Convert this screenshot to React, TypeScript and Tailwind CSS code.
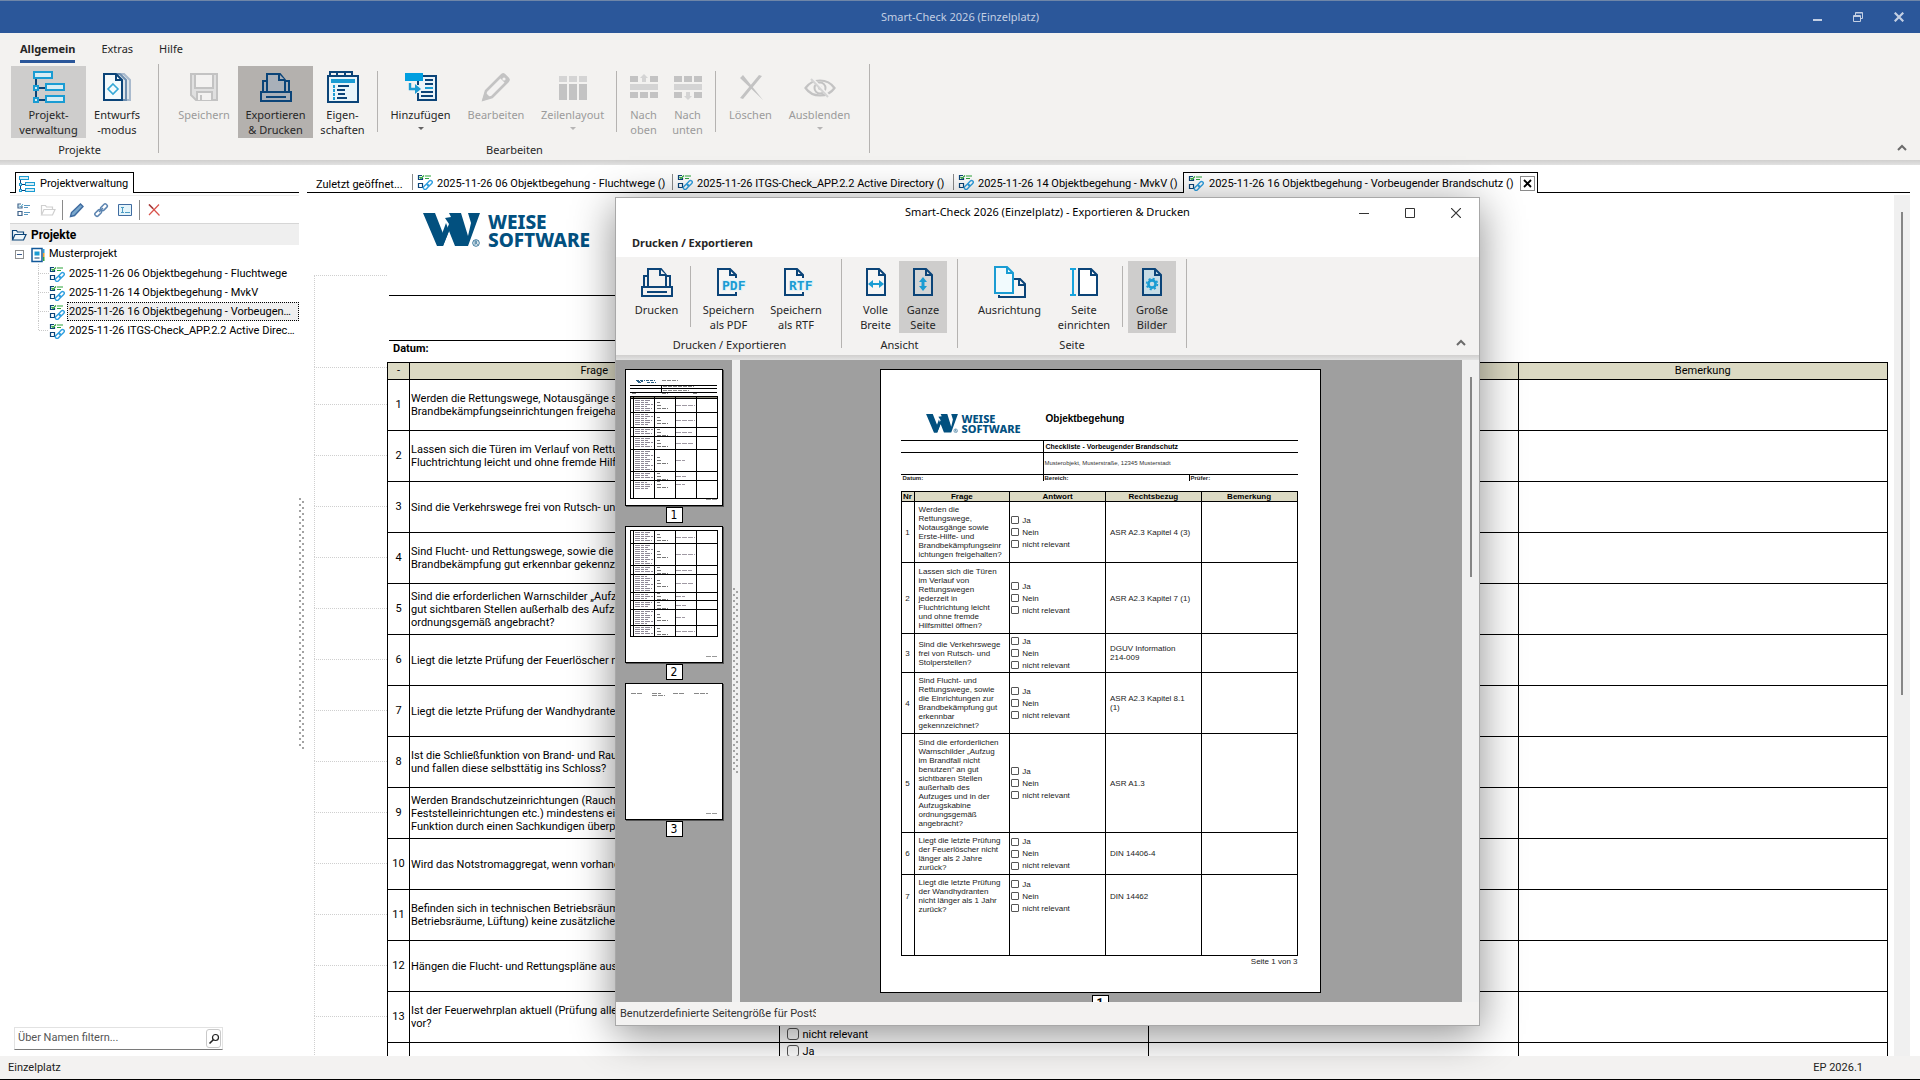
import { useState } from 'react'
import type { ReactNode } from 'react'
import clsx from 'clsx'

const NAVY = '#0b4478'
const CYAN = '#1a9cd3'
const GREY = '#c3c3c3'
const LIGHT = '#d4d4d4'

type IconProps = { children: ReactNode; size?: number; box?: number; className?: string }

function Svg({ children, size = 32, box = size, className }: IconProps) {
  return (
    <svg width={size} height={size} viewBox={`0 0 ${box} ${box}`} fill="none" aria-hidden="true" className={clsx('block shrink-0', className)}>
      {children}
    </svg>
  )
}

/* ---------- ribbon icons, 32px grid ---------- */

const TreeShape = (
  <g strokeWidth="2" shapeRendering="crispEdges">
    <path d="M3 8v23M6 17h7M6 29h7" stroke={NAVY} />
    <g stroke={CYAN} fill="#d7edf5">
      <path d="M1 1h18v6H1zM13 13h18v6H13zM13 25h18v6H13zM1 15h4v4H1zM1 27h4v4H1z" />
    </g>
  </g>
)

const TreeIcon = () => <Svg>{TreeShape}</Svg>

const DraftIcon = () => (
  <Svg>
    <g strokeWidth="2">
      <path d="M20 3h3l6 6v20h-4" stroke="#a9bacd" fill="#dfe5ea" />
      <path d="M16 3h3l6 6v20h-4" stroke="#6f8fb0" fill="#dfe5ea" />
      <path d="M3 3h12l6 6v20H3z" stroke={NAVY} fill="#f4fafc" />
      <path d="M15 3v6h6" stroke={NAVY} />
      <path d="M12 13l5 5-5 5-5-5z" stroke="#35a8d6" strokeWidth="1.6" />
    </g>
  </Svg>
)

const SaveIcon = () => (
  <Svg>
    <g stroke={GREY} strokeWidth="2">
      <path d="M3 3h26v26H8l-5-5z" fill="#e0e0e0" />
      <path d="M7 3h18v14H7z" fill="#f3f2f1" />
      <path d="M9 29v-8h15v8" fill="#f3f2f1" />
      <path d="M13 24v5" />
    </g>
  </Svg>
)

const PrintIcon = ({ fill = '#f3f2f1' }: { fill?: string }) => (
  <Svg>
    <g stroke={NAVY} strokeWidth="2" fill={fill}>
      <path d="M3 21V10h26v11" />
      <path d="M7 21V3h13l5 6v12" />
      <path d="M19 3v6h6" />
      <path d="M1 21h30v9H1z" shapeRendering="crispEdges" />
      <path d="M6 26h20" shapeRendering="crispEdges" />
    </g>
  </Svg>
)

const PropertiesIcon = () => (
  <Svg>
    <g shapeRendering="crispEdges">
      <path d="M1 5h30v26H1z" stroke={NAVY} strokeWidth="2" fill="#e9f5fa" />
      <path d="M3 4V1h22v3M10 1v4M18 1v4" stroke={NAVY} strokeWidth="2" />
      <path d="M4 8h24v4H4z" fill={CYAN} />
      <path d="M7 14v3M7 18v3M7 22v3M7 26v3" stroke={CYAN} strokeWidth="2" />
      <path d="M11 15h11M10 19h8M11 23h7M10 27h10" stroke={NAVY} strokeWidth="2" />
    </g>
  </Svg>
)

const AddIcon = () => (
  <Svg>
    <path d="M13 14V5h18v24H13v-7" stroke={NAVY} strokeWidth="2" fill="#eaf3f8" shapeRendering="crispEdges" />
    <path d="M20 9h8M20 13h8M16 21h12M16 25h12" stroke={NAVY} strokeWidth="2" shapeRendering="crispEdges" />
    <path d="M20 17h8" stroke={CYAN} strokeWidth="2" />
    <path d="M0 2h18v8H0z" fill="#009fe0" />
    <path d="M5 12v6h6" stroke={CYAN} strokeWidth="2.4" />
    <path d="M10 13l6 5-6 5z" fill={CYAN} />
  </Svg>
)

const PencilIcon = () => (
  <Svg>
    <path d="M3.500 28.500l2.500-8.500L21.500 4.500c1-1 2-1 3 0l3 3c1 1 1 2 0 3L12 26z" stroke={GREY} strokeWidth="2.600" fill="#f3f2f1" />
    <path d="M19 6l7 7 3-3c.8-1 .8-2 0-3l-4-4c-1-1-2-1-3 0zM2 30l3-9 6 6z" fill={GREY} />
    <circle cx="24" cy="8" r="1.600" fill="#f3f2f1" />
  </Svg>
)

const RowLayoutIcon = () => (
  <Svg>
    <path d="M2 5h8v6H2zM12 5h8v6h-8zM22 5h8v6h-8z" fill={LIGHT} />
    <path d="M2 13h8v16H2zM12 13h8v16h-8zM22 13h8v16h-8z" fill={GREY} />
  </Svg>
)

const MoveUpIcon = () => (
  <Svg>
    <path d="M2 5h8v6H2zM22 5h8v6h-8zM2 21h8v6H2zM12 21h8v6h-8zM22 21h8v6h-8z" fill={GREY} />
    <path d="M2 13h28v6H2z" fill={LIGHT} />
    <path d="M16 3l4 4h-2v4h-4V7h-2z" fill={LIGHT} />
  </Svg>
)

const MoveDownIcon = () => (
  <Svg>
    <path d="M2 5h8v6H2zM12 5h8v6h-8zM22 5h8v6h-8zM2 21h8v6H2zM22 21h8v6h-8z" fill={GREY} />
    <path d="M2 13h28v6H2z" fill={LIGHT} />
    <path d="M16 29l4-4h-2v-4h-4v4h-2z" fill={LIGHT} />
  </Svg>
)

const DeleteIcon = () => (
  <Svg>
    <path d="M8 4l20 25L5 7zM27 5L8 28l-3-1L24 4z" fill={GREY} />
  </Svg>
)

const HideIcon = () => (
  <Svg>
    <path d="M1.500 17C5 12 10 9.500 16 9.500S27 12 30.500 17C27 22 22 24.500 16 24.500S5 22 1.500 17z" stroke={GREY} strokeWidth="2.200" />
    <circle cx="16" cy="17" r="5.500" stroke={GREY} strokeWidth="2" />
    <circle cx="16" cy="17" r="2" fill={GREY} />
    <path d="M9 8l17 18" stroke="#f3f2f1" strokeWidth="2" />
    <path d="M7 8l17 18" stroke={LIGHT} strokeWidth="2" />
  </Svg>
)

const PageOutline = ({ fill = '#f7f6f5' }: { fill?: string }) => (
  <g stroke={NAVY} strokeWidth="2">
    <path d="M7 3h12l6 6v20H7z" fill={fill} />
    <path d="M19 3v6h6" />
  </g>
)

function FormatIcon({ label }: { label: string }) {
  return (
    <Svg className="overflow-visible">
      <path d="M23 12V9l-6-6H5v26h18v-3" stroke={NAVY} strokeWidth="2" fill="#f7f6f5" />
      <path d="M17 3v6h6" stroke={NAVY} strokeWidth="2" />
      <text x="9" y="24" fill={CYAN} stroke="#dff1f8" strokeWidth="2" paintOrder="stroke" className="font-['DejaVu_Sans_Mono',monospace] text-[13px] font-bold">
        {label}
      </text>
    </Svg>
  )
}

const FullWidthIcon = () => (
  <Svg>
    <PageOutline />
    <path d="M12 18h9" stroke={CYAN} strokeWidth="2" />
    <path d="M8 18l5-4v8zM24 18l-5-4v8z" fill={CYAN} />
  </Svg>
)

const FullPageIcon = () => (
  <Svg>
    <PageOutline fill="#d3d5d6" />
    <path d="M16 14v8" stroke={CYAN} strokeWidth="3" />
    <path d="M16 11l4 5h-8zM16 25l4-5h-8z" fill={CYAN} />
  </Svg>
)

const OrientationIcon = () => (
  <Svg>
    <path d="M5 29v2h26V18l-5-5h-6" stroke={NAVY} strokeWidth="2" fill="#f7f6f5" />
    <path d="M25 13v6h6" stroke={NAVY} strokeWidth="2" />
    <path d="M1 1h12l6 6v20H1z" stroke={CYAN} strokeWidth="2" fill="#f1fafd" />
    <path d="M13 1v6h6" stroke={CYAN} strokeWidth="2" />
  </Svg>
)

const PageSetupIcon = () => (
  <Svg>
    <path d="M2 3h6M2 29h6M5 3v26" stroke="#16a3dd" strokeWidth="2" />
    <path d="M11 3h12l6 6v20H11z" stroke={NAVY} strokeWidth="2" fill="#fff" />
    <path d="M23 3v6h6" stroke={NAVY} strokeWidth="2" />
  </Svg>
)

const LargeImagesIcon = () => (
  <Svg>
    <PageOutline fill="#c8dde6" />
    <circle cx="16" cy="18" r="3.600" stroke={CYAN} strokeWidth="2.600" />
    <circle cx="16" cy="18" r="5.400" stroke={CYAN} strokeWidth="1.600" strokeDasharray="2.100 2.140" />
  </Svg>
)

/* ---------- small icons ---------- */

const CheckLinkIcon = () => (
  <Svg size={16}>
    <path d="M5 1.500H1.500v4h4V4M1.500 9.500h4v4h-4z" stroke={NAVY} strokeWidth="1.200" />
    <path d="M2.500 3l1.500 1.500L7 1.500M8 2h6M8 4.500h4" stroke="#2da33a" strokeWidth="1.200" />
    <g stroke="#2f9fe0" strokeWidth="1.400">
      <rect x="-3" y="-1.700" width="6" height="3.400" rx="1.700" transform="translate(9 12.800) rotate(-45)" />
      <rect x="-3" y="-1.700" width="6" height="3.400" rx="1.700" transform="translate(12.600 9.200) rotate(-45)" />
    </g>
  </Svg>
)

const ListIcon = () => (
  <Svg size={16}>
    <path d="M5 2H2v4h4V4M2 9.500h4v4H2z" stroke="#40648c" strokeWidth="1.200" />
    <path d="M3 3.500l1.500 1.500L7 2" stroke="#49a4c8" />
    <path d="M8 3.500h6M8 5.500h4M8 10.500h6M8 12.500h4" stroke="#5796bf" />
  </Svg>
)

const FolderIcon = ({ color = NAVY, fill = '#eef6fa' }: { color?: string; fill?: string }) => (
  <Svg size={16}>
    <path d="M1.500 12.500v-9h4l1 1.500h6v2.500" stroke={color} fill={fill} strokeWidth="1.200" />
    <path d="M1.500 13l2.500-5.500h11L12.500 13z" stroke={color} fill={fill} strokeWidth="1.200" />
  </Svg>
)

const EditSmallIcon = () => (
  <Svg size={16}>
    <path d="M1.500 14.500l1-4L11.500 2l2.500 2.500-8.500 9z" stroke="#3f6ba0" strokeWidth="1.400" fill="#79a7cc" />
  </Svg>
)

const LinkSmallIcon = () => (
  <Svg size={16}>
    <g stroke="#5c84b0" strokeWidth="1.500">
      <rect x="-3.600" y="-2" width="7.200" height="4" rx="1.500" transform="translate(5.200 11) rotate(-45)" />
      <rect x="-3.600" y="-2" width="7.200" height="4" rx="1.500" transform="translate(11 5.200) rotate(-45)" />
      <path d="M6 10l4-4" />
    </g>
  </Svg>
)

const RenameIcon = () => (
  <Svg size={16}>
    <path d="M1.500 2.500h13v11h-13z" stroke="#3f6ba0" fill="#e4f4fa" />
    <path d="M4 5.500h3M5.500 5v6M4 10.500h3M8 10.500h5" stroke="#4c9cc4" />
  </Svg>
)

const RemoveIcon = () => (
  <Svg size={16}>
    <path d="M3 2.500l10.500 11M13 2.500L3 13" stroke="#d9534c" strokeWidth="1.200" />
    <path d="M3 2.500l4 4" stroke="#a04040" strokeWidth="1.400" />
  </Svg>
)

const BookIcon = () => (
  <Svg size={16}>
    <path d="M2 1.500h10v13H2z" stroke="#12599a" strokeWidth="1.500" fill="#fff" />
    <path d="M4.500 4.500h5v4h-5z" fill={CYAN} />
    <path d="M4.500 11h5" stroke={NAVY} />
    <path d="M13 2h1.500v4H13z" fill="#2ba2dc" />
    <path d="M13 6h1.500v4H13z" fill="#f0a030" />
    <path d="M13 10h1.500v4H13z" fill="#3aa745" />
  </Svg>
)

const Chevron = () => (
  <Svg size={10}>
    <path d="M1 7l4-4 4 4" stroke="#6b6b6b" strokeWidth="2" />
  </Svg>
)

const WMark = ({ className }: { className?: string }) => (
  <svg viewBox="0 0 57 34" aria-hidden="true" className={clsx('shrink-0 text-[#02507f]', className)} fill="currentColor">
    <path d="M0 0h12l9 23 5-12-4-6 6-1-2-4h12l7 23L48 10 45 0h12L45 33H32l-6-15-6 15h-6z" />
    <path d="M14 33h6l6-15-3-8-7 19z" />
    <circle cx="53" cy="30" r="3.300" fill="none" stroke="currentColor" strokeWidth=".8" />
    <path d="M52 32v-4h1.500l.5 1-.5 1H52M53.500 30l1 2" fill="none" stroke="currentColor" strokeWidth=".7" />
  </svg>
)

/* ---------- ribbon parts ---------- */

type RibbonButtonProps = {
  icon: ReactNode
  lines: string[]
  width: string
  disabled?: boolean
  dropdown?: boolean
  state?: 'checked' | 'pressed'
}

function RibbonButton({ icon, lines, width, disabled, dropdown, state }: RibbonButtonProps) {
  return (
    <button
      type="button"
      disabled={disabled}
      className={clsx(
        'flex h-[72px] shrink-0 flex-col items-center pt-[5px] text-[11px] leading-[15px]',
        width,
        disabled ? 'text-[#9b9b9b]' : 'text-[#262626]',
        state === 'checked' && 'bg-[#cecdcc]',
        state === 'pressed' && 'bg-[#b4b1ae]',
      )}
    >
      {icon}
      <span className="mt-1 block whitespace-nowrap">
        {lines.map((line) => (
          <span key={line} className="block">{line}</span>
        ))}
      </span>
      {dropdown ? <span className="mt-[5px] border-x-[3px] border-t-[3px] border-x-transparent border-t-current opacity-70" /> : null}
    </button>
  )
}

const InnerSeparator = () => <span className="mx-[5px] mt-[5px] h-[61px] w-px shrink-0 bg-[#b5b3b1]" />

function RibbonGroup({ label, children, className }: { label: string; children: ReactNode; className?: string }) {
  return (
    <div className={clsx('flex h-[89px] shrink-0 flex-col border-r border-[#b5b3b1] pt-[2px]', className)}>
      <div className="flex">{children}</div>
      <div className="pt-1 text-center text-[11px] leading-[15px] text-[#262626]">{label}</div>
    </div>
  )
}

const ribbonShadow = 'h-[5px] shrink-0 bg-linear-to-b from-[#d0cfce] to-[#e2e2e2]'

/* ---------- main window ---------- */

function TitleBar() {
  return (
    <header className="flex h-[33px] shrink-0 items-center border-t border-[#6f86a8] bg-[#2b579a] text-[#c3cfe3]">
      <span className="w-[138px]" />
      <h1 className="flex-1 text-center text-[11px]">Smart-Check 2026 (Einzelplatz)</h1>
      <div className="flex w-[138px] items-center justify-end gap-[31px] pr-4">
        <button type="button" aria-label="Minimieren">
          <Svg size={10}><path d="M1 8h9" stroke="currentColor" strokeWidth="2" /></Svg>
        </button>
        <button type="button" aria-label="Wiederherstellen">
          <Svg size={10}><path d="M.5 3.500h7v6h-7zM2.500 3V.5h7v6H8M.5 4.500h7M2.500 1h7" stroke="currentColor" /></Svg>
        </button>
        <button type="button" aria-label="Schließen">
          <Svg size={10}><path d="M.7.7l8.600 8.600M9.300.7L.7 9.300" stroke="currentColor" strokeWidth="2.200" /></Svg>
        </button>
      </div>
    </header>
  )
}

function Ribbon() {
  const [tab, setTab] = useState('Allgemein')

  return (
    <div className="shrink-0 bg-[#f3f2f0] pb-[7px]">
      <nav className="flex h-[31px] items-end gap-[26px] pb-px pl-5 text-[11px] leading-[15px] text-[#262626]">
        {['Allgemein', 'Extras', 'Hilfe'].map((item) => (
          <button
            key={item}
            type="button"
            onClick={() => setTab(item)}
            className={clsx('border-b-[3px] pb-1', tab === item ? 'border-[#2b579a] font-bold' : 'border-transparent')}
          >
            {item}
          </button>
        ))}
      </nav>
      <div className="flex">
        <RibbonGroup label="Projekte" className="pr-[10px] pl-[11px]">
          <RibbonButton width="w-[75px]" icon={<TreeIcon />} lines={['Projekt-', 'verwaltung']} state="checked" />
          <RibbonButton width="w-[62px]" icon={<DraftIcon />} lines={['Entwurfs', '-modus']} />
        </RibbonGroup>
        <RibbonGroup label="Bearbeiten" className="pr-[10px] pl-[11px]">
          <RibbonButton width="w-[68px]" icon={<SaveIcon />} lines={['Speichern']} disabled />
          <RibbonButton width="w-[75px]" icon={<PrintIcon fill="#a9b0b9" />} lines={['Exportieren', '& Drucken']} state="pressed" />
          <RibbonButton width="w-[59px]" icon={<PropertiesIcon />} lines={['Eigen-', 'schaften']} />
          <InnerSeparator />
          <RibbonButton width="w-[75px]" icon={<AddIcon />} lines={['Hinzufügen']} dropdown />
          <RibbonButton width="w-[76px]" icon={<PencilIcon />} lines={['Bearbeiten']} disabled />
          <RibbonButton width="w-[77px]" icon={<RowLayoutIcon />} lines={['Zeilenlayout']} disabled dropdown />
          <InnerSeparator />
          <RibbonButton width="w-[43px]" icon={<MoveUpIcon />} lines={['Nach', 'oben']} disabled />
          <RibbonButton width="w-[45px]" icon={<MoveDownIcon />} lines={['Nach', 'unten']} disabled />
          <InnerSeparator />
          <RibbonButton width="w-[59px]" icon={<DeleteIcon />} lines={['Löschen']} disabled />
          <RibbonButton width="w-[79px]" icon={<HideIcon />} lines={['Ausblenden']} disabled dropdown />
        </RibbonGroup>
        <button type="button" aria-label="Menüband minimieren" className="mr-[13px] ml-auto self-end pb-0">
          <Chevron />
        </button>
      </div>
    </div>
  )
}

const projectFiles = [
  '2025-11-26 06 Objektbegehung - Fluchtwege',
  '2025-11-26 14 Objektbegehung - MvkV',
  '2025-11-26 16 Objektbegehung - Vorbeugender Brandschutz',
  '2025-11-26 ITGS-Check_APP.2.2 Active Directory',
]

function Sidebar() {
  const [selected, setSelected] = useState(2)

  return (
    <aside className="flex w-[289px] shrink-0 flex-col">
      <div className="flex h-[21px]">
        <span className="w-[5px] border-b border-black" />
        <button type="button" className="flex w-[119px] items-center gap-[5px] border-x border-t border-black pt-[2px] pl-[3px]">
          <Svg size={16} box={32}>{TreeShape}</Svg>
          Projektverwaltung
        </button>
        <span className="flex-1 border-b border-black" />
      </div>
      <div className="mt-[2px] flex h-[29px] items-center border-t border-b border-t-[#ededed] border-b-[#d6d6d6] pl-[6px]">
        <button type="button" aria-label="Checkliste"><ListIcon /></button>
        <button type="button" aria-label="Öffnen" className="ml-2"><FolderIcon color="#cfcfcf" fill="#fff" /></button>
        <span className="mx-[6px] h-5 w-px bg-[#8a8a8a]" />
        <button type="button" aria-label="Bearbeiten"><EditSmallIcon /></button>
        <button type="button" aria-label="Verknüpfen" className="ml-2"><LinkSmallIcon /></button>
        <button type="button" aria-label="Umbenennen" className="ml-2"><RenameIcon /></button>
        <span className="mx-[6px] h-5 w-px bg-[#8a8a8a]" />
        <button type="button" aria-label="Löschen"><RemoveIcon /></button>
      </div>
      <div className="flex h-[21px] items-center gap-1 bg-[#efefef] pl-[1px] text-[12px] font-bold">
        <FolderIcon />
        Projekte
      </div>
      <div className="flex h-[19px] items-center pl-[5px]">
        <button type="button" aria-label="Zuklappen" className="flex size-[9px] items-center justify-center border border-[#8d8d8d] bg-white">
          <span className="h-px w-[5px] bg-[#3b5b8b]" />
        </button>
        <span className="mr-1 w-[2px]" />
        <BookIcon />
        <span className="ml-[3px]">Musterprojekt</span>
      </div>
      <ul>
        {projectFiles.map((name, i) => (
          <li key={name} className="flex h-[19px] items-center pl-7">
            <svg width="11" height="19" className="shrink-0" aria-hidden="true">
              <path d={i === projectFiles.length - 1 ? 'M.5 0v9.500H11' : 'M.5 0v19M0 9.500h11'} fill="none" stroke="#c9c9c9" strokeDasharray="1 1" />
            </svg>
            <CheckLinkIcon />
            <button
              type="button"
              onClick={() => setSelected(i)}
              className={clsx('ml-[2px] h-[19px] min-w-0 truncate border border-dotted px-px pt-px text-left', selected === i ? 'flex-1 border-black bg-[#efefef]' : 'border-transparent')}
            >
              {name}
            </button>
          </li>
        ))}
      </ul>
      <div className="mt-auto mb-[6px] ml-1 flex h-[23px] w-[209px] items-center border border-[#e2e2e2] border-b-[#7a7a7a] pr-[1px] pl-[3px]">
        <input aria-label="Über Namen filtern" placeholder="Über Namen filtern..." className="min-w-0 flex-1 bg-transparent outline-none placeholder:text-[#555]" />
        <button type="button" aria-label="Suchen" className="flex h-[19px] w-[15px] items-center justify-center rounded-[3px] border border-[#c9c9c9]">
          <Svg size={12}><circle cx="7.500" cy="4.500" r="3" stroke="#222" strokeWidth="1.200" /><path d="M5.300 6.800L1.500 10.500" stroke="#222" strokeWidth="1.600" /></Svg>
        </button>
      </div>
    </aside>
  )
}

function DotGrip({ id, className }: { id: string; className: string }) {
  return (
    <svg width="6" aria-hidden="true" className={clsx('shrink-0 self-center', className)}>
      <pattern id={id} width="6" height="6" patternUnits="userSpaceOnUse">
        <path d="M0 0h2v2H0zM3 3h2v2H3z" fill="#a3a3a3" />
      </pattern>
      <rect width="6" height="100%" fill={`url(#${id})`} />
    </svg>
  )
}

const documentTabs = [
  { label: '2025-11-26 06 Objektbegehung - Fluchtwege ()', width: 'w-[260px]' },
  { label: '2025-11-26 ITGS-Check_APP.2.2 Active Directory ()', width: 'w-[281px]' },
  { label: '2025-11-26 14 Objektbegehung - MvkV ()', width: 'w-[230px]' },
]

function DocumentTabs() {
  return (
    <div className="flex h-[21px] shrink-0 whitespace-nowrap">
      <button type="button" className="w-[105px] border-b border-black pt-[5px] pl-[9px] text-left">Zuletzt geöffnet...</button>
      {documentTabs.map((tab) => (
        <button key={tab.label} type="button" className={clsx('flex items-center border-b border-black', tab.width)}>
          <span className="mr-1 h-4 w-px bg-[#8a8a8a]" />
          <CheckLinkIcon />
          <span className="ml-1 pt-1">{tab.label}</span>
        </button>
      ))}
      <div className="flex w-[355px] items-center border-x border-t border-black pl-1">
        <CheckLinkIcon />
        <span className="ml-[5px] pt-[3px]">2025-11-26 16 Objektbegehung - Vorbeugender Brandschutz ()</span>
        <button type="button" aria-label="Tab schließen" className="mr-[2px] ml-auto flex size-[15px] items-center justify-center border border-[#8a8a8a]">
          <Svg size={9}><path d="M1 1l7 7M8 1L1 8" stroke="#000" strokeWidth="1.800" /></Svg>
        </button>
      </div>
      <span className="flex-1 border-b border-black" />
    </div>
  )
}

const questions = [
  ['Werden die Rettungswege, Notausgänge sowie Erste-Hilfe- und', 'Brandbekämpfungseinrichtungen freigehalten?'],
  ['Lassen sich die Türen im Verlauf von Rettungswegen jederzeit in', 'Fluchtrichtung leicht und ohne fremde Hilfsmittel öffnen?'],
  ['Sind die Verkehrswege frei von Rutsch- und Stolperstellen?'],
  ['Sind Flucht- und Rettungswege, sowie die Einrichtungen zur', 'Brandbekämpfung gut erkennbar gekennzeichnet?'],
  ['Sind die erforderlichen Warnschilder „Aufzug im Brandfall nicht benutzen“ an', 'gut sichtbaren Stellen außerhalb des Aufzuges und in der Aufzugskabine', 'ordnungsgemäß angebracht?'],
  ['Liegt die letzte Prüfung der Feuerlöscher nicht länger als 2 Jahre zurück?'],
  ['Liegt die letzte Prüfung der Wandhydranten nicht länger als 1 Jahr zurück?'],
  ['Ist die Schließfunktion von Brand- und Rauchschutztüren gewährleistet', 'und fallen diese selbsttätig ins Schloss?'],
  ['Werden Brandschutzeinrichtungen (Rauchabzüge,', 'Feststelleinrichtungen etc.) mindestens einmal jährlich auf ihre', 'Funktion durch einen Sachkundigen überprüft?'],
  ['Wird das Notstromaggregat, wenn vorhanden, regelmäßig geprüft?'],
  ['Befinden sich in technischen Betriebsräumen (z. B. elektrische', 'Betriebsräume, Lüftung) keine zusätzlichen Brandlasten?'],
  ['Hängen die Flucht- und Rettungspläne aus?'],
  ['Ist der Feuerwehrplan aktuell (Prüfung alle 2 Jahre) und liegt er', 'vor?'],
  [],
]

const answers = ['Ja', 'Nein', 'nicht relevant']
const cell = 'border border-black'

function ChecklistDocument() {
  return (
    <div className="mt-[2px] flex min-h-0 flex-1 overflow-hidden">
      <div className="ml-[7px] w-[73px] shrink-0 pt-[80px] [&>div]:border-t [&>div]:border-l [&>div]:border-dotted [&>div]:border-[#cfcfcf]">
        <div className="h-[92px]" />
        <div className="h-[37px]" />
        {questions.map((_, i) => <div key={i} className="h-[51px]" />)}
      </div>
      <div className="mr-[6px] min-w-0 flex-1">
        <div className="flex h-[100px] gap-2 pt-[18px] pl-9 text-[#02507f]">
          <WMark className="h-[34px] w-[57px]" />
          <div className="font-['Noto_Sans',sans-serif] text-[19px] leading-[18px] font-extrabold">WEISE<br />SOFTWARE</div>
        </div>
        <div className="ml-[2px] h-[46px] w-[760px] border-y border-black" />
        <div className="h-[21px] pl-[6px] font-bold">Datum:</div>
        <table className="w-full table-fixed border-collapse">
          <colgroup>
            <col className="w-[22px]" />
            <col />
            <col />
            <col />
            <col />
          </colgroup>
          <thead>
            <tr className="h-[17px] bg-[#dcdac4]">
              {['-', 'Frage', 'Antwort', 'Rechtsbezug', 'Bemerkung'].map((head) => (
                <th key={head} className={clsx(cell, 'leading-4 font-normal')}>{head}</th>
              ))}
            </tr>
          </thead>
          <tbody>
            {questions.map((lines, i) => (
              <tr key={i} className="h-[51px]">
                <td className={clsx(cell, 'text-center')}>{lines.length > 0 ? i + 1 : null}</td>
                <td className={clsx(cell, 'overflow-hidden pl-px leading-[13px] whitespace-nowrap')}>
                  {lines.map((line) => <div key={line}>{line}</div>)}
                </td>
                <td className={clsx(cell, 'pl-[7px]')}>
                  <div className="flex flex-col gap-px">
                    {answers.map((answer) => (
                      <label key={answer} className="flex h-4 items-center gap-1 leading-[15px]">
                        <input type="checkbox" className="size-3 appearance-none rounded-[3px] border border-[#555] bg-white" />
                        {answer}
                      </label>
                    ))}
                  </div>
                </td>
                <td className={cell} />
                <td className={cell} />
              </tr>
            ))}
          </tbody>
        </table>
      </div>
      <div className="mr-[10px] flex w-4 shrink-0 justify-center bg-[#f0f0f0] pt-[17px]">
        <span className="h-[483px] w-[2px] bg-[#868686]" />
      </div>
    </div>
  )
}

/* ---------- print dialog ---------- */

const printRows = [
  { height: 'h-[61px]', law: 'ASR A2.3 Kapitel 4 (3)', text: 'Werden die|Rettungswege,|Notausgänge sowie|Erste-Hilfe- und|Brandbekämpfungseinr|ichtungen freigehalten?' },
  { height: 'h-[71px]', law: 'ASR A2.3 Kapitel 7 (1)', text: 'Lassen sich die Türen|im Verlauf von|Rettungswegen|jederzeit in|Fluchtrichtung leicht|und ohne fremde|Hilfsmittel öffnen?' },
  { height: 'h-[39px]', law: 'DGUV Information|214-009', text: 'Sind die Verkehrswege|frei von Rutsch- und|Stolperstellen?' },
  { height: 'h-[61px]', law: 'ASR A2.3 Kapitel 8.1|(1)', text: 'Sind Flucht- und|Rettungswege, sowie|die Einrichtungen zur|Brandbekämpfung gut|erkennbar|gekennzeichnet?' },
  { height: 'h-[99px]', law: 'ASR A1.3', text: 'Sind die erforderlichen|Warnschilder „Aufzug|im Brandfall nicht|benutzen“ an gut|sichtbaren Stellen|außerhalb des|Aufzuges und in der|Aufzugskabine|ordnungsgemäß|angebracht?' },
  { height: 'h-[42px]', law: 'DIN 14406-4', text: 'Liegt die letzte Prüfung|der Feuerlöscher nicht|länger als 2 Jahre|zurück?' },
  { height: 'h-[81px]', law: 'DIN 14462', text: 'Liegt die letzte Prüfung|der Wandhydranten|nicht länger als 1 Jahr|zurück?' },
]

const Lines = ({ text }: { text: string }) => text.split('|').map((line) => <div key={line}>{line}</div>)

function PreviewPage() {
  return (
    <div className="h-[624px] w-[441px] border border-black bg-white pt-[44px] pr-[22px] pl-5 font-['Liberation_Sans',Arial,sans-serif] text-[8px] leading-[9px] text-[#222]">
      <div className="flex h-[26px] text-black">
        <div className="flex w-[145px] gap-1 pl-[25px] text-[#02507f]">
          <WMark className="h-[19px] w-[32px]" />
          <div className="font-['Noto_Sans',sans-serif] text-[11px] leading-[10px] font-extrabold">WEISE<br />SOFTWARE</div>
        </div>
        <div className="text-[10px] leading-[10px] font-bold">Objektbegehung</div>
      </div>
      <div className="grid grid-cols-[142px_1fr] text-black">
        <div className="h-[11px] border-t border-black" />
        <div className="border-t border-l border-black pl-[2px] text-[7px] leading-[11px] font-bold">Checkliste - Vorbeugender Brandschutz</div>
        <div className="h-[22px] border-t border-black" />
        <div className="border-t border-l border-black pl-[1px] text-[6px] leading-[21px] text-[#333]">Musterobjekt, Musterstraße, 12345 Musterstadt</div>
      </div>
      <div className="grid h-[17px] grid-cols-[142px_146px_1fr] border-t border-black text-[6px] leading-[6px] font-bold">
        <div className="pl-[2px]">Datum:</div>
        <div className="h-[6px] border-l border-black pl-[1px]">Bereich:</div>
        <div className="h-[6px] border-l border-black pl-[1px]">Prüfer:</div>
      </div>
      <table className="w-full table-fixed border-collapse">
        <colgroup>
          <col className="w-[13px]" />
          <col />
          <col />
          <col />
          <col />
        </colgroup>
        <thead>
          <tr className="h-[10px] bg-[#dcdac4] text-black">
            {['Nr', 'Frage', 'Antwort', 'Rechtsbezug', 'Bemerkung'].map((head) => (
              <th key={head} className={clsx(cell, 'p-0 font-bold')}>{head}</th>
            ))}
          </tr>
        </thead>
        <tbody>
          {printRows.map((row, i) => {
            const last = i === printRows.length - 1
            const align = last ? 'align-top' : 'align-middle'
            return (
              <tr key={row.text} className={row.height}>
                <td className={clsx(cell, align, 'text-center', last && 'pt-[17px]')}>{i + 1}</td>
                <td className={clsx(cell, align, 'pl-1 whitespace-nowrap', last && 'pt-[3px]')}><Lines text={row.text} /></td>
                <td className={clsx(cell, align, 'pl-[1px]', last && 'pt-[3px]')}>
                  {answers.map((answer) => (
                    <label key={answer} className="flex h-3 items-center gap-[3px]">
                      <input type="checkbox" className="size-2 appearance-none rounded-[1px] border border-[#555] bg-white" />
                      {answer}
                    </label>
                  ))}
                </td>
                <td className={clsx(cell, align, 'pl-1', last && 'pt-[17px]')}><Lines text={row.law} /></td>
                <td className={cell} />
              </tr>
            )
          })}
        </tbody>
      </table>
      <div className="pt-px text-right">Seite 1 von 3</div>
    </div>
  )
}

type ThumbRow = [top: number, bottom: number]

const firstPageRows: ThumbRow[] = [[29, 43], [43, 58], [58, 67], [67, 80], [80, 102], [102, 111], [111, 129]]
const secondPageRows: ThumbRow[] = [[4, 17], [17, 39], [39, 48], [48, 66], [66, 74], [74, 83], [83, 99], [99, 110]]

function ThumbTable({ rows, header }: { rows: ThumbRow[]; header?: boolean }) {
  const top = header ? 27 : rows[0][0]
  const bottom = rows[rows.length - 1][1]
  const questionLines = rows.flatMap(([y1, y2], i) => {
    const end = header && i === rows.length - 1 ? y1 + 9 : y2 - 1
    const list = []
    for (let y = y1 + 2; y < end; y += 2) list.push(y)
    return list
  })
  return (
    <g shapeRendering="crispEdges">
      {header ? <path d="M5 28h87" stroke="#8b8978" strokeWidth="2" /> : null}
      <path d={`M5.500 ${top}V${bottom}M8.500 ${top}V${bottom}M29.500 ${top}V${bottom}M50.500 ${top}V${bottom}M71.500 ${top}V${bottom}M92.500 ${top}V${bottom}`} stroke="#000" />
      <path d={`M5 ${top + 0.5}h88` + rows.map(([y1]) => `M5 ${y1 + 0.5}h88`).join('') + `M5 ${bottom + 0.5}h88`} stroke="#000" />
      {questionLines.map((y, i) => (
        <path key={y} d={`M10 ${y + 0.5}h${[16, 13, 18, 12, 17][i % 5]}`} stroke="#8e8896" strokeDasharray="5 1 3 1" />
      ))}
      {rows.map(([y1, y2], i) => {
        const mid = header && i === rows.length - 1 ? y1 + 4 : Math.round((y1 + y2) / 2)
        return (
          <g key={y1} stroke="#777">
            <path d={`M32 ${mid - 2.5}h3M32 ${mid + 0.5}h4M32 ${mid + 3.5}h11`} strokeDasharray="4 1" />
            <path d={`M51 ${mid + 0.5}h${[19, 19, 16, 18, 9, 10, 9, 19][i]}`} stroke="#a09aa4" strokeDasharray="5 1" />
          </g>
        )
      })}
    </g>
  )
}

function Thumbnail({ page }: { page: number }) {
  return (
    <li className="flex flex-col items-center">
      <button type="button" aria-label={`Seite ${page}`} className="h-[137px] w-[98px] border border-black bg-white shadow-[1px_1px_0_#555]">
        <svg width="96" height="135" viewBox="1 1 96 135" aria-hidden="true" className="block">
          {page === 1 ? (
            <g>
              <path d="M11 11.500h9M12 12.500h6M13 13.500h4M21 11.500h9M22 13.500h9" stroke="#2b5f83" strokeDasharray="3 1" />
              <path d="M37 11.500h16M38 17.500h31M38 21.500h26M7 24.500h5M37 24.500h6M68 24.500h5" stroke="#888" strokeDasharray="4 1" />
              <path d="M5 16.500h87M5 19.500h87M5 23.500h87M36.500 16v8" stroke="#000" />
              <ThumbTable rows={firstPageRows} header />
            </g>
          ) : null}
          {page === 2 ? <ThumbTable rows={secondPageRows} /> : null}
          {page === 3 ? <path d="M6 10.500h12M27 10.500h9M27 12.500h13M48 10.500h12M69 10.500h14" stroke="#888" strokeDasharray="5 1" /> : null}
          <path d="M81 130.500h11" stroke="#999" strokeDasharray="5 1" />
        </svg>
      </button>
      <span className="mt-px h-4 w-[17px] border border-black bg-white text-center font-['DejaVu_Sans_Condensed',sans-serif] text-[12px] leading-[15px]">{page}</span>
    </li>
  )
}

function PrintDialog() {
  return (
    <section
      role="dialog"
      aria-label="Exportieren & Drucken"
      className="absolute top-[197px] left-[615px] flex h-[829px] w-[865px] flex-col border border-[#a8a8a8] bg-white shadow-[0_8px_40px_rgba(0,0,0,0.45)]"
    >
      <div className="flex h-[29px] shrink-0 items-center font-['Noto_Sans',sans-serif] text-[11px] text-black">
        <span className="w-[138px]" />
        <h2 className="flex-1 text-center">Smart-Check 2026 (Einzelplatz) - Exportieren &amp; Drucken</h2>
        <div className="flex w-[138px] items-center justify-end gap-[36px] pr-[18px] text-[#333]">
          <button type="button" aria-label="Minimieren"><Svg size={10}><path d="M0 5.500h10" stroke="currentColor" /></Svg></button>
          <button type="button" aria-label="Maximieren"><Svg size={10}><path d="M.5.5h9v9h-9z" stroke="currentColor" /></Svg></button>
          <button type="button" aria-label="Schließen"><Svg size={10}><path d="M0 0l10 10M10 0L0 10" stroke="currentColor" strokeWidth="1.200" /></Svg></button>
        </div>
      </div>
      <div className="flex h-[30px] shrink-0 items-center pt-[3px] pl-4 font-['Noto_Sans',sans-serif] text-[11px] font-bold text-[#262626]">
        <button type="button">Drucken / Exportieren</button>
      </div>
      <div className="flex h-[98px] shrink-0 bg-[#f3f2f1] pt-[2px] font-['Noto_Sans',sans-serif]">
        <RibbonGroup label="Drucken / Exportieren" className="pr-[10px] pl-[12px]">
          <RibbonButton width="w-[57px]" icon={<PrintIcon />} lines={['Drucken']} />
          <InnerSeparator />
          <RibbonButton width="w-[65px]" icon={<FormatIcon label="PDF" />} lines={['Speichern', 'als PDF']} />
          <RibbonButton width="w-[70px]" icon={<FormatIcon label="RTF" />} lines={['Speichern', 'als RTF']} />
        </RibbonGroup>
        <RibbonGroup label="Ansicht" className="pr-[10px] pl-[10px]">
          <RibbonButton width="w-[47px]" icon={<FullWidthIcon />} lines={['Volle', 'Breite']} />
          <RibbonButton width="w-[48px]" icon={<FullPageIcon />} lines={['Ganze', 'Seite']} state="checked" />
        </RibbonGroup>
        <RibbonGroup label="Seite" className="pr-[10px] pl-[10px]">
          <RibbonButton width="w-[83px]" icon={<OrientationIcon />} lines={['Ausrichtung']} />
          <RibbonButton width="w-[66px]" icon={<PageSetupIcon />} lines={['Seite', 'einrichten']} />
          <InnerSeparator />
          <RibbonButton width="w-[48px]" icon={<LargeImagesIcon />} lines={['Große', 'Bilder']} state="checked" />
        </RibbonGroup>
        <button type="button" aria-label="Menüband minimieren" className="mr-[13px] mb-[7px] ml-auto self-end">
          <Chevron />
        </button>
      </div>
      <div className={ribbonShadow} />
      <div className="flex min-h-0 flex-1">
        <ul className="flex w-[116px] shrink-0 flex-col items-center gap-[3px] bg-[#9f9f9f] pt-[9px]">
          {[1, 2, 3].map((page) => <Thumbnail key={page} page={page} />)}
        </ul>
        <div className="flex w-2 shrink-0 justify-center bg-[#f0f0f0]">
          <DotGrip id="preview-grip" className="h-[186px]" />
        </div>
        <div className="flex min-w-0 flex-1 flex-col items-center overflow-hidden bg-[#9f9f9f] pt-[9px] pr-[2px]">
          <div className="shrink-0"><PreviewPage /></div>
          <span className="mt-[2px] h-4 w-[17px] shrink-0 border border-black bg-white text-center text-[12px] leading-[15px] font-bold">1</span>
        </div>
        <div className="flex w-[17px] shrink-0 justify-center bg-[#f0f0f0] pt-[17px]">
          <span className="h-[200px] w-[2px] bg-[#868686]" />
        </div>
      </div>
      <div className="flex h-[23px] shrink-0 items-center bg-[#f3f2f1] pt-[2px] pl-1 text-[#333]">
        <span className="w-[196px] overflow-hidden whitespace-nowrap">Benutzerdefinierte Seitengröße für PostScript</span>
      </div>
    </section>
  )
}

export default function App() {
  return (
    <div className="relative flex h-screen flex-col overflow-hidden bg-white font-['Roboto','Noto_Sans',sans-serif] text-[11px] text-black">
      <div className="shrink-0 font-['Noto_Sans',sans-serif]">
        <TitleBar />
        <Ribbon />
        <div className={ribbonShadow} />
      </div>
      <main className="flex min-h-0 flex-1 pt-[7px] pl-[10px]">
        <Sidebar />
        <DotGrip id="sidebar-grip" className="mt-5 h-[252px]" />
        <div className="ml-[2px] flex min-w-0 flex-1 flex-col">
          <div className="mr-[10px]"><DocumentTabs /></div>
          <ChecklistDocument />
        </div>
      </main>
      <footer className="flex h-6 shrink-0 items-center justify-between border-b border-black bg-[#f3f2f1] pt-[2px] pr-[57px] pl-2 text-[#222]">
        <span>Einzelplatz</span>
        <span>EP 2026.1</span>
      </footer>
      <PrintDialog />
    </div>
  )
}
